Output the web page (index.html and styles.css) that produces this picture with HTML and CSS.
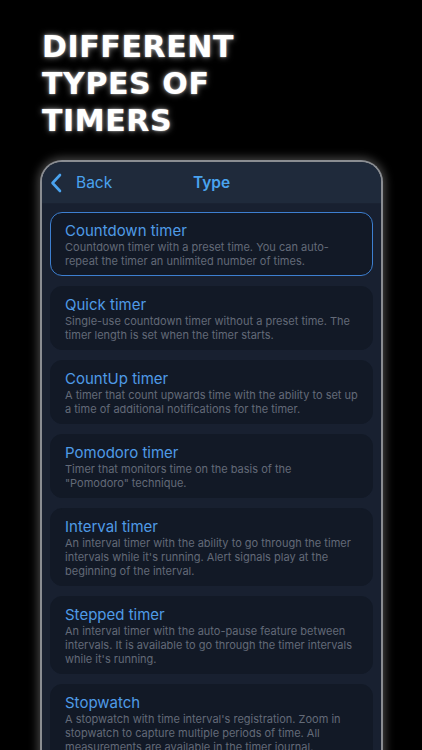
FILE: index.html
```html
<!DOCTYPE html>
<html>
<head>
<meta charset="utf-8">
<link rel="stylesheet" href="styles.css">
</head>
<body>
<div class="screen">
  <h1 class="hero">DIFFERENT<br>TYPES OF<br>TIMERS</h1>
  <div class="phone">
    <div class="nav">
      <div class="back">
        <svg class="chev" width="12" height="20" viewBox="0 0 12 20"><path d="M10 2 L2.5 10 L10 18" fill="none" stroke="#4aa3ef" stroke-width="2.6" stroke-linecap="round" stroke-linejoin="round"/></svg>
        <span>Back</span>
      </div>
      <div class="nav-title">Type</div>
    </div>
    <div class="list">
      <div class="card selected">
        <div class="card-title">Countdown timer</div>
        <div class="card-desc">Countdown timer with a preset time. You can auto-<br>repeat the timer an unlimited number of times.</div>
      </div>
      <div class="card">
        <div class="card-title">Quick timer</div>
        <div class="card-desc">Single-use countdown timer without a preset time. The<br>timer length is set when the timer starts.</div>
      </div>
      <div class="card">
        <div class="card-title">CountUp timer</div>
        <div class="card-desc">A timer that count upwards time with the ability to set up<br>a time of additional notifications for the timer.</div>
      </div>
      <div class="card">
        <div class="card-title">Pomodoro timer</div>
        <div class="card-desc">Timer that monitors time on the basis of the<br>"Pomodoro" technique.</div>
      </div>
      <div class="card">
        <div class="card-title">Interval timer</div>
        <div class="card-desc">An interval timer with the ability to go through the timer<br>intervals while it's running. Alert signals play at the<br>beginning of the interval.</div>
      </div>
      <div class="card">
        <div class="card-title">Stepped timer</div>
        <div class="card-desc">An interval timer with the auto-pause feature between<br>intervals. It is available to go through the timer intervals<br>while it's running.</div>
      </div>
      <div class="card">
        <div class="card-title">Stopwatch</div>
        <div class="card-desc">A stopwatch with time interval's registration. Zoom in<br>stopwatch to capture multiple periods of time. All<br>measurements are available in the timer journal.</div>
      </div>
    </div>
  </div>
</div>
</body>
</html>
```
FILE: styles.css
```css
* { box-sizing: border-box; }
html, body { margin: 0; padding: 0; background: #000; }
.screen {
  width: 422px;
  height: 750px;
  overflow: hidden;
  background: #000;
  font-family: Inter, "Liberation Sans", sans-serif;
}
.hero {
  margin: 0;
  padding: 28px 0 0 42px;
  font-family: "DejaVu Sans", sans-serif;
  font-weight: bold;
  font-size: 30px;
  line-height: 37px;
  letter-spacing: 0.6px;
  color: #fff;
  text-shadow: 0 0 6px rgba(255,255,255,0.55), 0 0 2px rgba(255,255,255,0.6);
}
.phone {
  margin: 21px 39px 0 40px;
  height: 700px;
  border: 2px solid #8a8d92;
  border-bottom: none;
  border-radius: 22px 22px 0 0;
  background: #182030;
  box-shadow: 0 0 10px 2px rgba(255,255,255,0.28);
  overflow: hidden;
}
.nav {
  height: 42px;
  background: #1f2a3b;
  display: flex;
  align-items: center;
  position: relative;
  border-bottom: 1px solid #1a2232;
}
.back {
  display: flex;
  align-items: center;
  gap: 14px;
  padding-left: 8px;
  color: #4aa3ef;
  font-size: 15.5px;
}
.nav-title {
  position: absolute;
  left: 0; right: 0;
  text-align: center;
  color: #4aa3ef;
  font-size: 15.5px;
  font-weight: 600;
  pointer-events: none;
}
.list {
  padding: 8px 8px;
  display: flex;
  flex-direction: column;
  gap: 10px;
}
.card {
  background: #121926;
  border: 1px solid #121926;
  border-radius: 12px;
  padding: 9px 14px 7px;
}
.card.selected {
  border-color: #3d7fd0;
}
.card-title {
  color: #4f9be6;
  font-size: 15px;
  line-height: 18px;
}
.card-desc {
  color: #636a78;
  font-size: 11px;
  line-height: 14px;
  white-space: nowrap;
}
```
